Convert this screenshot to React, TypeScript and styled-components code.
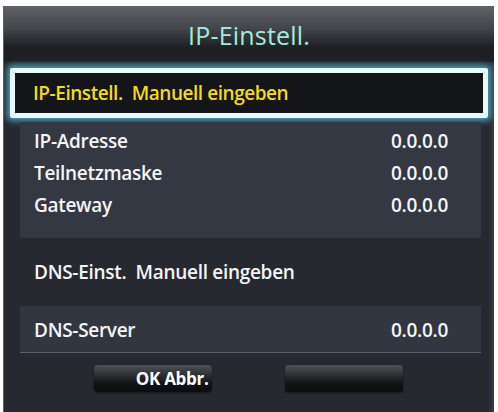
import React from "react";
import styled, { createGlobalStyle } from "styled-components";

interface Entry {
  label: string;
  value: string;
}

const addressRows: Entry[] = [
  { label: "IP-Adresse", value: "0.0.0.0" },
  { label: "Teilnetzmaske", value: "0.0.0.0" },
  { label: "Gateway", value: "0.0.0.0" },
];

const App: React.FC = () => {
  return (
    <>
      <GlobalStyle />
      <Panel>
        <Header>
          <Title>IP-Einstell.</Title>
        </Header>
        <FocusBox>
          <FocusText>IP-Einstell.  Manuell eingeben</FocusText>
        </FocusBox>
        <Group>
          {addressRows.map((row) => (
            <Row key={row.label}>
              <Label>{row.label}</Label>
              <Value>{row.value}</Value>
            </Row>
          ))}
        </Group>
        <PlainRow>
          <Label>DNS-Einst.  Manuell eingeben</Label>
        </PlainRow>
        <DnsBox>
          <Row>
            <Label>DNS-Server</Label>
            <Value>0.0.0.0</Value>
          </Row>
        </DnsBox>
        <Buttons>
          <Btn>OK Abbr.</Btn>
          <Btn />
        </Buttons>
      </Panel>
    </>
  );
};

export default App;

const GlobalStyle = createGlobalStyle`
  html, body {
    margin: 0;
    padding: 0;
    background: #ffffff;
  }
  body {
    font-family: "Open Sans", "Noto Sans", sans-serif;
  }
`;

const Panel = styled.div`
  width: 491px;
  height: 406px;
  margin: 6px 0 0 3px;
  background: #262930;
  border-left: 1px solid #5d6065;
  box-shadow: inset -6px 0 4px -3px #3a3d44;
  box-sizing: border-box;
  display: flex;
  flex-direction: column;
  overflow: hidden;
`;

const Header = styled.div`
  height: 56px;
  flex-shrink: 0;
  display: flex;
  align-items: center;
  justify-content: center;
  background: linear-gradient(
    #5f6267 0%,
    #42454a 40%,
    #1d1f23 74%,
    #1c1e22 100%
  );
`;

const Title = styled.div`
  color: #a4ecd9;
  font-size: 25px;
  font-weight: 400;
  letter-spacing: 0.2px;
  padding-top: 2px;
`;

const FocusBox = styled.div`
  margin: 6px 6px 0 6px;
  height: 40px;
  border: 5px solid #e6f9fb;
  border-radius: 2px;
  background: #131519;
  box-shadow: 0 0 6px 3px rgba(90, 200, 225, 0.75);
  display: flex;
  align-items: center;
  padding-left: 18px;
`;

const FocusText = styled.span`
  color: #f2dc12;
  font-size: 19px;
  font-weight: 600;
  white-space: pre;
  letter-spacing: -0.45px;
`;

const Group = styled.div`
  margin: 4px 13px 0 16px;
  padding: 3px 33px 17px 14px;
  background: #343842;
  border-radius: 2px;
`;

const Row = styled.div`
  height: 32px;
  display: flex;
  align-items: center;
  justify-content: space-between;
`;

const Label = styled.span`
  color: #f4f5f6;
  font-size: 19px;
  font-weight: 600;
  white-space: pre;
  letter-spacing: -0.3px;
`;

const Value = styled(Label)``;

const PlainRow = styled.div`
  height: 68px;
  display: flex;
  align-items: center;
  padding-left: 30px;
`;

const DnsBox = styled.div`
  margin: 0 13px 0 16px;
  padding: 8px 33px 6px 14px;
  background: #323640;
  border-bottom: 1px solid #5a5f69;
`;

const Buttons = styled.div`
  display: flex;
  justify-content: center;
  gap: 73px;
  margin-top: 12px;
  padding-right: 2px;
`;

const Btn = styled.div`
  width: 118px;
  height: 27px;
  border-radius: 4px;
  background: linear-gradient(#4e5156 0%, #2a2c30 40%, #111214 70%, #0c0d0f 100%);
  box-shadow: 0 1px 2px rgba(0, 0, 0, 0.5);
  display: flex;
  align-items: center;
  justify-content: flex-end;
  padding-right: 3px;
  box-sizing: border-box;
  color: #ffffff;
  font-size: 17px;
  font-weight: 700;
  letter-spacing: -0.3px;
`;
